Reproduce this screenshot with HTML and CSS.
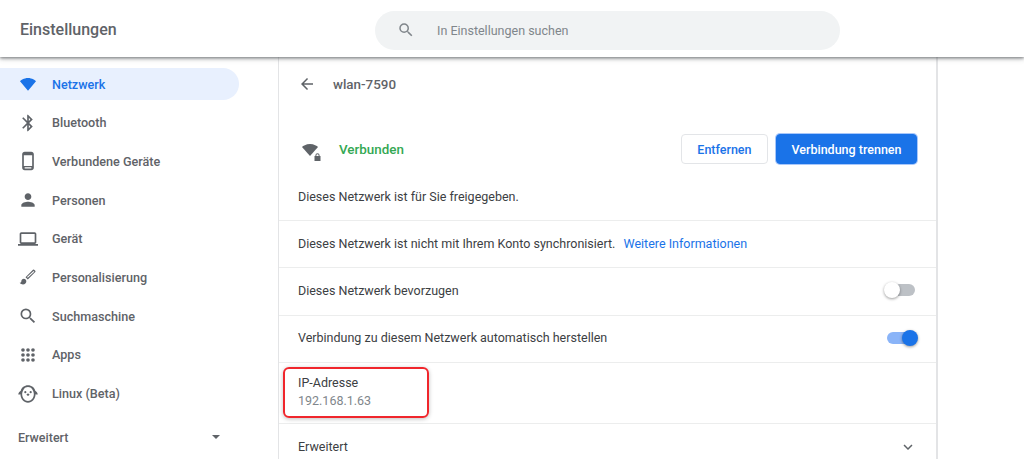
FILE: index.html
```html
<!DOCTYPE html>
<html lang="de">
<head>
    <meta charset="UTF-8">
    <meta name="viewport" content="width=device-width, initial-scale=1.0">
    <title>Einstellungen</title>
    <link rel="stylesheet" href="styles.css">
</head>
<body>
    <header class="topbar">
        <div class="app-title">Einstellungen</div>
        <div class="search">
            <svg class="search-icon" viewBox="0 0 24 24"><path d="M15.5 14h-.79l-.28-.27A6.47 6.47 0 0 0 16 9.5 6.5 6.5 0 1 0 9.5 16c1.61 0 3.09-.59 4.23-1.57l.27.28v.79l5 4.99L20.49 19l-4.99-5zm-6 0C7.01 14 5 11.99 5 9.5S7.01 5 9.5 5 14 7.01 14 9.5 11.99 14 9.5 14z"/></svg>
            <span>In Einstellungen suchen</span>
        </div>
    </header>

    <div class="layout">
        <nav class="sidebar">
            <a class="nav-item active">
                <svg viewBox="0 0 24 24"><path d="M12 20 2.400 8.600C3.500 7.700 6.900 4.800 12 4.800s8.500 2.900 9.600 3.800L12 20z"/></svg>
                <span>Netzwerk</span>
            </a>
            <a class="nav-item">
                <svg viewBox="0 0 24 24"><path d="M17.710 7.710 12 2h-1v7.590L6.410 5 5 6.410 10.590 12 5 17.590 6.410 19 11 14.410V22h1l5.710-5.710-4.300-4.290 4.300-4.290zM13 5.830l1.880 1.880L13 9.590V5.830zm1.880 10.460L13 18.170v-3.760l1.880 1.880z"/></svg>
                <span>Bluetooth</span>
            </a>
            <a class="nav-item">
                <svg viewBox="0 0 24 24"><path d="M16 1H8C6.340 1 5 2.340 5 4v16c0 1.660 1.340 3 3 3h8c1.660 0 3-1.340 3-3V4c0-1.660-1.340-3-3-3zm1 17H7V5h10v13zm-1 3H8v-1.500h8V21z"/></svg>
                <span>Verbundene Geräte</span>
            </a>
            <a class="nav-item">
                <svg viewBox="0 0 24 24"><path d="M12 12c2.210 0 4-1.790 4-4s-1.790-4-4-4-4 1.790-4 4 1.790 4 4 4zm0 2c-2.670 0-8 1.340-8 4v2h16v-2c0-2.660-5.330-4-8-4z"/></svg>
                <span>Personen</span>
            </a>
            <a class="nav-item">
                <svg viewBox="0 0 24 24"><path d="M20 18c1.100 0 2-.9 2-2V6c0-1.100-.9-2-2-2H4c-1.100 0-2 .9-2 2v10c0 1.100.9 2 2 2H0v2h24v-2h-4zM4 6h16v10H4V6z"/></svg>
                <span>Gerät</span>
            </a>
            <a class="nav-item">
                <svg viewBox="0 0 24 24"><path d="M7 14c-1.660 0-3 1.340-3 3 0 1.310-1.160 2-2 2 .92 1.220 2.490 2 4 2 2.210 0 4-1.790 4-4 0-1.660-1.340-3-3-3zm13.710-9.370-1.340-1.340a1 1 0 0 0-1.410 0L9 12.250 11.750 15l8.960-8.960a1 1 0 0 0 0-1.410zM11.750 12.800l-.95-.95 7.870-7.100.9.9-7.820 7.150z"/></svg>
                <span>Personalisierung</span>
            </a>
            <a class="nav-item">
                <svg viewBox="0 0 24 24"><path d="M15.500 14h-.79l-.28-.27A6.470 6.470 0 0 0 16 9.500 6.500 6.500 0 1 0 9.500 16c1.610 0 3.090-.59 4.230-1.570l.27.28v.79l5 4.990L20.490 19l-4.990-5zm-6 0C7.010 14 5 11.990 5 9.500S7.010 5 9.500 5 14 7.010 14 9.500 11.990 14 9.500 14z"/></svg>
                <span>Suchmaschine</span>
            </a>
            <a class="nav-item">
                <svg viewBox="0 0 24 24">
                    <circle cx="6" cy="6" r="2.200"/><circle cx="12" cy="6" r="2.200"/><circle cx="18" cy="6" r="2.200"/>
                    <circle cx="6" cy="12" r="2.200"/><circle cx="12" cy="12" r="2.200"/><circle cx="18" cy="12" r="2.200"/>
                    <circle cx="6" cy="18" r="2.200"/><circle cx="12" cy="18" r="2.200"/><circle cx="18" cy="18" r="2.200"/>
                </svg>
                <span>Apps</span>
            </a>
            <a class="nav-item">
                <svg viewBox="0 0 24 24">
                    <path fill-rule="evenodd" d="M12 1.500c4.300 0 7.800 2.800 8.700 6.600 1.500.9 2.800 2.500 3 4.400-.7.300-1.700.2-2.600-.2C20.900 18 17 22.500 12 22.500S3.100 18 2.900 12.300c-.9.400-1.900.5-2.600.2.200-1.900 1.500-3.500 3-4.400C4.200 4.300 7.700 1.500 12 1.500zm0 2.200c-2.300 0-4 1-5 2.500C5.700 8 5 10 5 12.300c0 4.400 3.100 8 7 8s7-3.600 7-8c0-2.300-.7-4.300-2-6.100-1-1.500-2.700-2.500-5-2.500z"/>
                    <circle cx="8.800" cy="9.800" r="1.300"/><circle cx="15.200" cy="9.800" r="1.300"/>
                    <path d="M12 11.200l2 1.800-2 1.400-2-1.400z"/>
                </svg>
                <span>Linux (Beta)</span>
            </a>
            <div class="nav-advanced">
                <span>Erweitert</span>
                <i class="caret"></i>
            </div>
        </nav>

        <main class="card">
            <div class="subpage-head">
                <svg class="back" viewBox="0 0 24 24"><path d="M20 11H7.830l5.590-5.590L12 4l-8 8 8 8 1.410-1.410L7.830 13H20v-2z"/></svg>
                <span>wlan-7590</span>
            </div>

            <div class="status-row">
                <svg class="wifi-lock" viewBox="0 0 24 24">
                    <path d="M10.800 18 1.200 7.200C2.400 6 6 3.600 10.800 3.600S19.200 6 20.400 7.200L10.800 18z"/>
                    <path d="M22.300 18v-.8a2.500 2.500 0 0 0-5 0v.8h-1.100v6h7.200v-6h-1.100zm-1.200 0h-2.600v-.8a1.300 1.300 0 0 1 2.600 0v.8z"/>
                </svg>
                <span class="connected">Verbunden</span>
                <div class="actions">
                    <button class="btn">Entfernen</button>
                    <button class="btn primary">Verbindung trennen</button>
                </div>
            </div>

            <div class="note">Dieses Netzwerk ist für Sie freigegeben.</div>
            <div class="row row-sync">
                <span>Dieses Netzwerk ist nicht mit Ihrem Konto synchronisiert. <a class="link">Weitere Informationen</a></span>
            </div>
            <div class="row">
                <span>Dieses Netzwerk bevorzugen</span>
                <div class="toggle"></div>
            </div>
            <div class="row">
                <span>Verbindung zu diesem Netzwerk automatisch herstellen</span>
                <div class="toggle on"></div>
            </div>
            <div class="ip-row">
                <div>IP-Adresse</div>
                <div class="ip-value">192.168.1.63</div>
                <div class="highlight"></div>
            </div>
            <div class="row advanced-row">
                <span>Erweitert</span>
                <svg class="chevron" viewBox="0 0 24 24"><path d="M7.410 8.590 12 13.170l4.590-4.580L18 10l-6 6-6-6z"/></svg>
            </div>
        </main>
    </div>
</body>
</html>
```

FILE: styles.css
```css
* {
    box-sizing: border-box;
}
html, body {
    height: 100%;
}
body {
    margin: 0;
    overflow: hidden;
    background: #fff;
    color: #3c4043;
    font-family: Roboto, "Noto Sans", sans-serif;
    font-size: 12.5px;
}
svg {
    fill: currentColor;
    display: block;
    flex-shrink: 0;
}

.topbar {
    position: relative;
    z-index: 2;
    display: flex;
    align-items: center;
    height: 57px;
    padding-left: 20px;
    background: #fff;
    box-shadow: 0 1px 3px rgba(60,64,67,0.6), 0 2px 5px rgba(60,64,67,0.25);
}
.app-title {
    width: 355px;
    margin-top: 2px;
    font-size: 16px;
    font-weight: 500;
    color: #5f6368;
}
.search {
    display: flex;
    align-items: center;
    width: 465px;
    height: 39px;
    margin-top: 3px;
    padding-left: 22px;
    border-radius: 20px;
    background: #f1f3f4;
    color: #80868b;
}
.search-icon {
    width: 18px;
    height: 18px;
    margin-right: 22px;
}

.layout {
    display: flex;
    height: 402px;
}

.sidebar {
    width: 278px;
    padding-top: 11px;
}
.nav-item {
    display: flex;
    align-items: center;
    width: 239px;
    height: 32px;
    margin-bottom: 6.7px;
    padding-left: 18px;
    border-radius: 0 16px 16px 0;
    color: #5f6368;
    font-size: 12.6px;
    font-weight: 500;
}
.nav-item svg {
    width: 20px;
    height: 20px;
    margin-right: 14px;
}
.nav-item.active {
    background: #e8f0fe;
    color: #1a73e8;
}
.nav-advanced {
    display: flex;
    align-items: center;
    justify-content: space-between;
    width: 220px;
    margin-top: 20px;
    padding-left: 18px;
    color: #5f6368;
    font-weight: 500;
    font-size: 12.5px;
}
.caret {
    width: 0;
    height: 0;
    border-left: 4.5px solid transparent;
    border-right: 4.5px solid transparent;
    border-top: 4.5px solid #5f6368;
}

.card {
    width: 660px;
    padding: 0 19px;
    border-left: 1px solid #e3e4e6;
    border-right: 2px solid #e3e4e6;
    background: #fff;
}
.subpage-head {
    display: flex;
    align-items: center;
    height: 54px;
    color: #5f6368;
    font-size: 13.4px;
    font-weight: 500;
}
.back {
    width: 18px;
    height: 18px;
    margin-right: 17px;
}
.status-row {
    display: flex;
    align-items: center;
    height: 34px;
    margin-top: 21px;
}
.wifi-lock {
    width: 20px;
    height: 20px;
    margin: 4px 18px 0 3px;
    color: #5f6368;
}
.connected {
    color: #34a853;
    font-size: 13.4px;
    font-weight: 500;
}
.actions {
    display: flex;
    gap: 8px;
    margin-left: auto;
}
.btn {
    height: 30px;
    padding: 0 15.5px;
    border: 1px solid #e3e5e8;
    border-radius: 4px;
    background: #fff;
    color: #1a73e8;
    font: 500 12.5px Roboto, sans-serif;
}
.btn.primary {
    padding: 0 14.5px;
    border-color: #1a73e8;
    background: #1a73e8;
    color: #fff;
    box-shadow: 0 0 0 1px #a8c7fa;
}
.note {
    height: 55px;
    margin: 0 -19px;
    padding: 23px 19px 0;
    border-bottom: 1px solid #eceded;
}
.row {
    display: flex;
    align-items: center;
    justify-content: space-between;
    height: 47.5px;
    margin: 0 -19px;
    padding: 0 19px 2px;
    border-bottom: 1px solid #eceded;
}
.row-sync {
    height: 47px;
}
.link {
    margin-left: 5px;
    color: #1a73e8;
}

.toggle {
    position: relative;
    width: 28px;
    height: 12px;
    margin-right: 2px;
    border-radius: 6px;
    background: #bdc1c6;
}
.toggle::after {
    content: "";
    position: absolute;
    top: -2px;
    left: -3px;
    width: 16px;
    height: 16px;
    border-radius: 50%;
    background: #fff;
    box-shadow: 0 1px 3px rgba(0,0,0,0.4);
}
.toggle.on {
    background: #8ab4f8;
}
.toggle.on::after {
    left: auto;
    right: -3px;
    background: #1a73e8;
}

.ip-row {
    position: relative;
    height: 61px;
    margin: 0 -19px;
    padding: 11px 19px 0;
    border-bottom: 1px solid #eceded;
    line-height: 18px;
}
.ip-value {
    color: #80868b;
}
.highlight {
    position: absolute;
    left: 4px;
    top: 4px;
    width: 146px;
    height: 51px;
    border: 2px solid #f0262c;
    border-radius: 6px;
    box-shadow: 0 1px 4px rgba(0,0,0,0.25);
}
.advanced-row {
    border-bottom: 0;
}
.chevron {
    width: 18px;
    height: 18px;
    color: #5f6368;
}
```
